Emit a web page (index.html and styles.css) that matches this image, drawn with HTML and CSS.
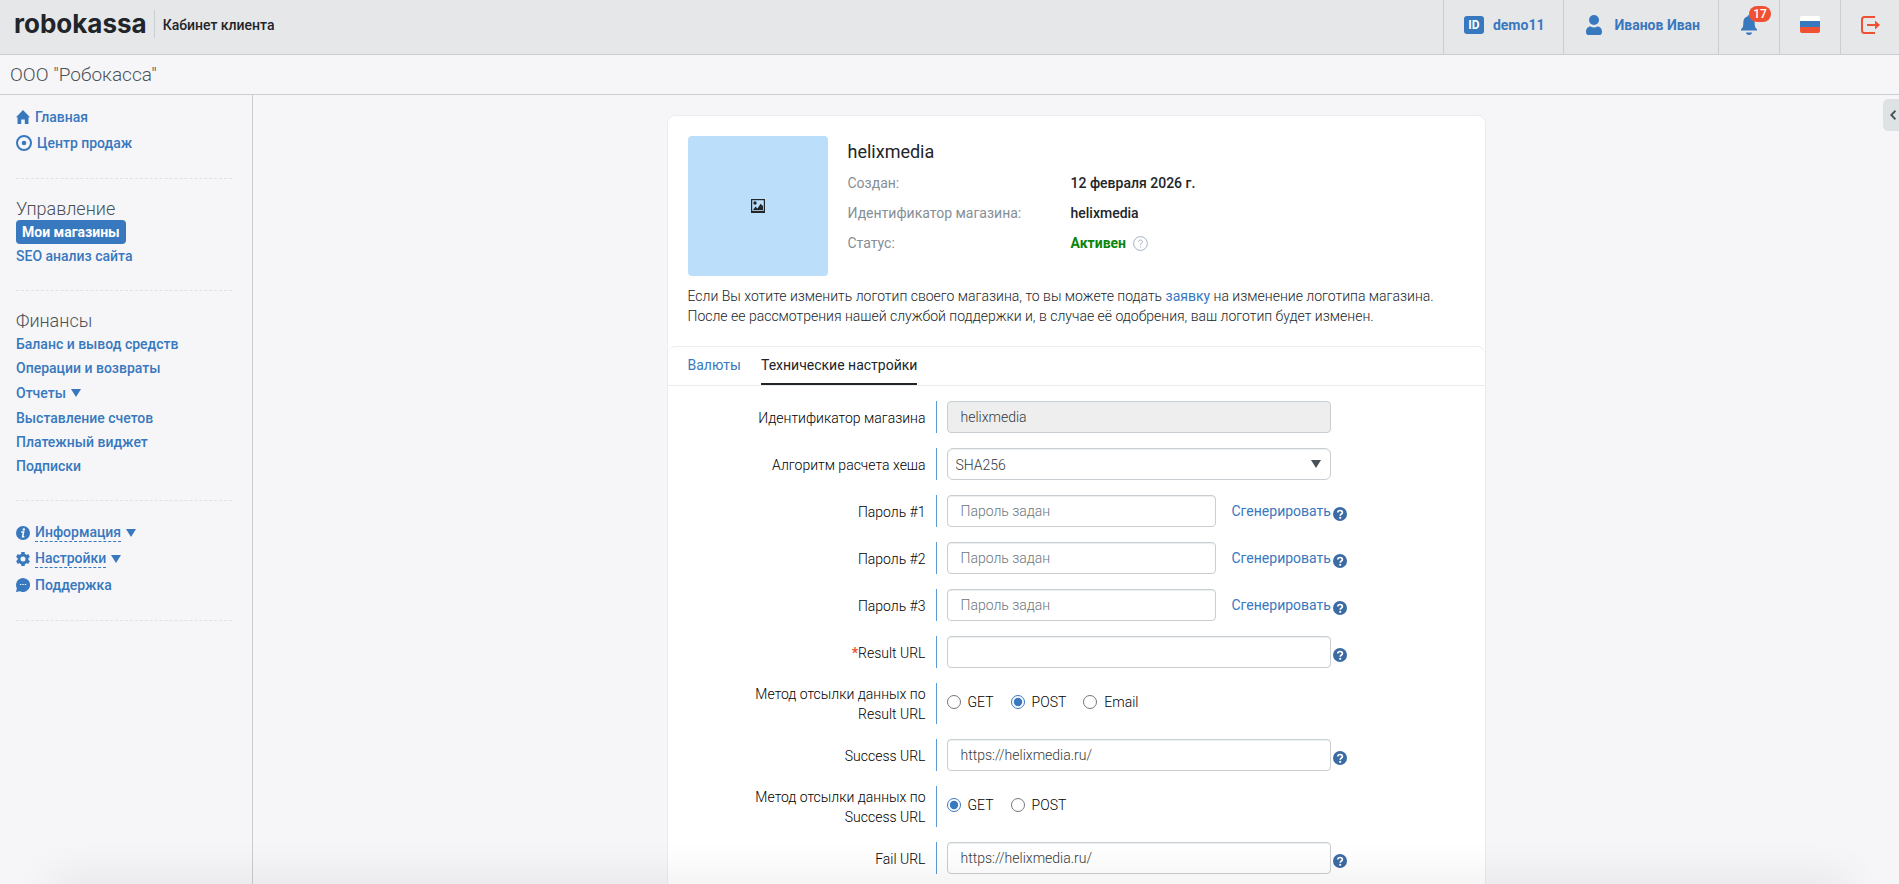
FILE: index.html
```html
<!DOCTYPE html>
<html lang="ru">

<head>
    <meta charset="UTF-8">
    <meta name="viewport" content="width=device-width, initial-scale=1.0">
    <title>Кабинет клиента</title>
    <link rel="stylesheet" href="styles.css">
</head>

<body>
    <!-- общие иконки -->
    <svg class="sprite" aria-hidden="true">
        <symbol id="help" viewBox="0 0 14 14">
            <circle cx="7" cy="7" r="7" fill="#3b6ba5" />
            <path d="M4.8 5.6C4.8 2.8 9.4 2.9 9.4 5.4C9.4 7 7.2 6.9 7.2 8.7" fill="none" stroke="#fff" stroke-width="1.7" />
            <circle cx="7.2" cy="10.8" r="1.1" fill="#fff" />
        </symbol>
        <symbol id="down" viewBox="0 0 10 8">
            <path d="M0 0H10L5 8Z" fill="currentColor" />
        </symbol>
    </svg>

    <header class="header">
        <a href="#" class="logo">robokassa</a>
        <span class="header-title">Кабинет клиента</span>
        <nav class="header-nav">
            <a href="#" class="header-item">
                <span class="id-icon">ID</span>
                <span>demo11</span>
            </a>
            <a href="#" class="header-item header-user">
                <svg width="16" height="20" viewBox="0 0 16 20" fill="currentColor">
                    <circle cx="8" cy="5" r="5" />
                    <path d="M0 17C0 13 2.5 11.5 4.5 11.5C6.5 12.7 9.5 12.7 11.5 11.5C13.5 11.5 16 13 16 17C16 19.5 14.5 20 13 20H3C1.5 20 0 19.5 0 17Z" />
                </svg>
                <span>Иванов Иван</span>
            </a>
            <a href="#" class="header-item header-square">
                <span class="bell">
                    <svg width="16" height="20" viewBox="0 0 16 20" fill="currentColor">
                        <path d="M8 0C9 0 9.5 .8 9.5 1.5C12.5 2.3 13.7 4.5 13.7 8C13.7 12 14.5 13.3 16 14V15.5H0V14C1.5 13.3 2.3 12 2.3 8C2.3 4.5 3.5 2.3 6.5 1.5C6.5 .8 7 0 8 0Z" />
                        <path d="M5 17.5H11C11 19 9.7 20 8 20S5 19 5 17.5Z" />
                    </svg>
                    <span class="badge">17</span>
                </span>
            </a>
            <a href="#" class="header-item header-square" aria-label="Язык">
                <span class="flag"></span>
            </a>
            <a href="#" class="header-item header-square logout" aria-label="Выход">
                <svg width="19" height="18" viewBox="0 0 19 18">
                    <path d="M14 1H3.5Q1 1 1 3.5V14.5Q1 17 3.5 17H14" fill="none" stroke="currentColor" stroke-width="2" />
                    <path d="M6 9H15" stroke="currentColor" stroke-width="2" />
                    <path d="M14 4.5L19 9L14 13.5Z" fill="currentColor" />
                </svg>
            </a>
        </nav>
    </header>

    <div class="company">ООО "Робокасса"</div>

    <div class="page">
        <aside class="sidebar">
            <ul class="menu menu-icons">
                <li><a href="#">
                    <svg width="14" height="14" viewBox="0 0 14 14" fill="currentColor">
                        <path d="M7 0L14 7.2H12.5V14H8.8V9.5H5.2V14H1.5V7.2H0Z" />
                    </svg>Главная</a></li>
                <li><a href="#">
                    <svg width="16" height="16" viewBox="0 0 16 16">
                        <circle cx="8" cy="8" r="7" fill="none" stroke="currentColor" stroke-width="2" />
                        <circle cx="8" cy="8" r="2.3" fill="currentColor" />
                    </svg>Центр продаж</a></li>
            </ul>
            <h2>Управление</h2>
            <ul class="menu">
                <li><a href="#" class="active">Мои магазины</a></li>
                <li><a href="#">SEO анализ сайта</a></li>
            </ul>
            <h2>Финансы</h2>
            <ul class="menu">
                <li><a href="#">Баланс и вывод средств</a></li>
                <li><a href="#">Операции и возвраты</a></li>
                <li class="submenu"><a href="#">Отчеты <svg class="arrow"><use href="#down" /></svg></a></li>
                <li><a href="#">Выставление счетов</a></li>
                <li><a href="#">Платежный виджет</a></li>
                <li><a href="#">Подписки</a></li>
            </ul>
            <ul class="menu menu-icons menu-info">
                <li><a href="#">
                    <svg width="14" height="14" viewBox="0 0 14 14">
                        <circle cx="7" cy="7" r="7" fill="currentColor" />
                        <circle cx="7.8" cy="3.5" r="1.2" fill="#fff" />
                        <path d="M5.2 6H7.6L6.6 10.8H8.3" fill="none" stroke="#fff" stroke-width="1.5" />
                    </svg><span class="dotted">Информация</span> <svg class="arrow"><use href="#down" /></svg></a></li>
                <li><a href="#">
                    <svg width="14" height="14" viewBox="0 0 14 14">
                        <circle cx="7" cy="7" r="4" fill="none" stroke="currentColor" stroke-width="3" />
                        <path d="M7 0V3M7 11V14M.9 3.5L3.5 5M10.5 9L13.1 10.5M.9 10.5L3.5 9M10.5 5L13.1 3.5" stroke="currentColor" stroke-width="3.5" />
                    </svg><span class="dotted">Настройки</span> <svg class="arrow"><use href="#down" /></svg></a></li>
                <li><a href="#">
                    <svg width="14" height="14" viewBox="0 0 14 14">
                        <path d="M7 0A7 7 0 1 1 4 13.3L0 14L.9 10.4A7 7 0 0 1 7 0Z" fill="currentColor" />
                        <path d="M4 6.5H5.3M6.4 6.5H7.7M8.8 6.5H10.1" stroke="#fff" stroke-width="1.2" />
                    </svg>Поддержка</a></li>
            </ul>
        </aside>

        <main class="content">
            <section class="card">
                <div class="shop">
                    <div class="shop-logo">
                        <svg width="14" height="14" viewBox="0 0 14 14">
                            <path d="M0 0H14V14H0Z" fill="#23282c" />
                            <path d="M1.2 1.2H12.8V11.8H1.2Z" fill="#bbdefb" />
                            <circle cx="4" cy="4" r="1.7" fill="#23282c" />
                            <path d="M2 11L4.5 7.5L6.5 9.5L9.5 4.8L12 7V11Z" fill="#23282c" />
                        </svg>
                    </div>
                    <div class="shop-info">
                        <h1>helixmedia</h1>
                        <dl>
                            <dt>Создан:</dt>
                            <dd>12 февраля 2026 г.</dd>
                            <dt>Идентификатор магазина:</dt>
                            <dd>helixmedia</dd>
                            <dt>Статус:</dt>
                            <dd class="status">Активен
                                <svg width="15" height="15" viewBox="0 0 15 15" fill="none" stroke="#a5b1c2">
                                    <circle cx="7.5" cy="7.5" r="6.9" />
                                    <path d="M5.5 5.9C5.5 3.5 9.5 3.5 9.5 5.8C9.5 7.3 7.5 7.3 7.5 9.2M7.5 10.4V11.5" />
                                </svg>
                            </dd>
                        </dl>
                    </div>
                </div>
                <div class="note">
                    <p>Если Вы хотите изменить логотип своего магазина, то вы можете подать <a href="#">заявку</a> на изменение логотипа магазина.</p>
                    <p>После ее рассмотрения нашей службой поддержки и, в случае её одобрения, ваш логотип будет изменен.</p>
                </div>

                <nav class="tabs">
                    <a href="#">Валюты</a>
                    <a href="#" class="current">Технические настройки</a>
                </nav>

                <form class="form">
                    <div class="row">
                        <label for="shop_id">Идентификатор магазина</label>
                        <div class="field"><input type="text" id="shop_id" value="helixmedia" disabled></div>
                    </div>
                    <div class="row">
                        <label for="hash">Алгоритм расчета хеша</label>
                        <div class="field">
                            <div class="select">
                                <select id="hash">
                                    <option>SHA256</option>
                                </select>
                                <svg class="arrow"><use href="#down" /></svg>
                            </div>
                        </div>
                    </div>
                    <div class="row">
                        <label for="pass1">Пароль #1</label>
                        <div class="field">
                            <input type="text" id="pass1" class="short" placeholder="Пароль задан">
                            <button type="button" class="generate">Сгенерировать</button>
                            <svg class="help"><use href="#help" /></svg>
                        </div>
                    </div>
                    <div class="row">
                        <label for="pass2">Пароль #2</label>
                        <div class="field">
                            <input type="text" id="pass2" class="short" placeholder="Пароль задан">
                            <button type="button" class="generate">Сгенерировать</button>
                            <svg class="help"><use href="#help" /></svg>
                        </div>
                    </div>
                    <div class="row">
                        <label for="pass3">Пароль #3</label>
                        <div class="field">
                            <input type="text" id="pass3" class="short" placeholder="Пароль задан">
                            <button type="button" class="generate">Сгенерировать</button>
                            <svg class="help"><use href="#help" /></svg>
                        </div>
                    </div>
                    <div class="row">
                        <label for="result_url"><span class="required">*</span>Result URL</label>
                        <div class="field">
                            <input type="text" id="result_url">
                            <svg class="help"><use href="#help" /></svg>
                        </div>
                    </div>
                    <div class="row" role="radiogroup" aria-labelledby="result_method">
                        <span class="label" id="result_method">Метод отсылки данных по Result URL</span>
                        <div class="field radios">
                            <label><input type="radio" name="result_method">GET</label>
                            <label><input type="radio" name="result_method" checked>POST</label>
                            <label><input type="radio" name="result_method">Email</label>
                        </div>
                    </div>
                    <div class="row">
                        <label for="success_url">Success URL</label>
                        <div class="field">
                            <input type="text" id="success_url" value="https://helixmedia.ru/">
                            <svg class="help"><use href="#help" /></svg>
                        </div>
                    </div>
                    <div class="row" role="radiogroup" aria-labelledby="success_method">
                        <span class="label" id="success_method">Метод отсылки данных по Success URL</span>
                        <div class="field radios">
                            <label><input type="radio" name="success_method" checked>GET</label>
                            <label><input type="radio" name="success_method">POST</label>
                        </div>
                    </div>
                    <div class="row">
                        <label for="fail_url">Fail URL</label>
                        <div class="field">
                            <input type="text" id="fail_url" value="https://helixmedia.ru/">
                            <svg class="help"><use href="#help" /></svg>
                        </div>
                    </div>
                </form>
            </section>
        </main>
    </div>

    <button type="button" class="panel-toggle" aria-label="Открыть панель">
        <svg width="6" height="10" viewBox="0 0 6 10" fill="none" stroke="#4a5157" stroke-width="2">
            <path d="M5.5 .7L1.3 5L5.5 9.3" />
        </svg>
    </button>
    <div class="bottom-shadow"></div>
</body>

</html>
```

FILE: styles.css
```css
* {
    margin: 0;
    padding: 0;
    box-sizing: border-box;
}

body {
    min-height: 100vh;
    display: flex;
    flex-direction: column;
    overflow: hidden;
    font-family: Roboto, "Liberation Sans", sans-serif;
    font-size: 14px;
    line-height: 20px;
    color: #212529;
    background: #f6f6f8;
}

a {
    color: #3878be;
    text-decoration: none;
}

ul {
    list-style: none;
}

.sprite {
    display: none;
}

.arrow {
    width: 10px;
    height: 8px;
}

/* шапка */
.header {
    display: flex;
    height: 55px;
    padding-left: 14px;
    background: #e6e7e9;
    border-bottom: 1px solid #c8ced2;
}

.logo {
    height: 28px;
    margin-top: 10px;
    padding-right: 7px;
    border-right: 1px solid #c8ced2;
    font-family: Inter, sans-serif;
    font-size: 26px;
    font-weight: 700;
    line-height: 28px;
    color: #212529;
}

.header-title {
    margin: 15px 0 0 8px;
    font-weight: 500;
}

.header-nav {
    display: flex;
    margin-left: auto;
}

.header-item {
    display: flex;
    align-items: center;
    padding: 0 19px 5px 20px;
    border-left: 1px solid #c8ced2;
    font-weight: 700;
}

.header-user {
    padding-left: 22px;
    padding-right: 18px;
}

.header-user svg {
    margin-right: 12px;
}

.header-square {
    justify-content: center;
    width: 61px;
    padding-left: 0;
    padding-right: 0;
}

.id-icon {
    width: 20px;
    height: 18px;
    margin-right: 9px;
    border-radius: 3px;
    background: #3878be;
    color: #fff;
    font-size: 12px;
    line-height: 18px;
    text-align: center;
}

.bell {
    position: relative;
    height: 20px;
}

.bell svg {
    display: block;
}

.badge {
    position: absolute;
    left: 8px;
    top: -9px;
    width: 22px;
    height: 16px;
    border-radius: 8px;
    background: #f05133;
    color: #fff;
    font-size: 12px;
    font-weight: 500;
    line-height: 16px;
    text-align: center;
}

.flag {
    width: 20px;
    height: 17px;
    border-radius: 2px;
    background: linear-gradient(#fff 5px, #3878be 5px, #3878be 11px, #f05133 11px);
}

.header-square.logout {
    width: 59px;
    color: #f05133;
}

.company {
    height: 40px;
    padding-left: 10px;
    border-bottom: 1px solid #c8ced2;
    font-size: 19px;
    font-weight: 300;
    line-height: 40px;
    color: #4a5157;
}

.page {
    display: flex;
    flex: 1;
}

/* боковое меню */
.sidebar {
    width: 253px;
    flex-shrink: 0;
    padding: 9px 20px 0 16px;
    border-right: 1px solid #c8ccd0;
}

.sidebar h2 {
    padding-top: 18px;
    font-size: 18px;
    font-weight: 300;
    line-height: 22px;
    color: #4a5157;
}

.menu {
    padding-bottom: 22px;
    margin-bottom: 1px;
    border-bottom: 1px dashed #dfe2e5;
    line-height: 24px;
}

.menu a {
    display: flex;
    align-items: center;
    width: fit-content;
    font-weight: 500;
}

.menu .arrow {
    margin-left: 5px;
}

.menu .submenu {
    line-height: 26px;
}

.menu-icons a {
    height: 26px;
}

.menu-icons a > svg:first-child {
    margin-right: 5px;
}

.menu-info {
    padding-top: 18px;
}

.menu .active {
    padding: 0 6px;
    border-radius: 4px;
    background: #3878be;
    color: #fff;
    font-weight: 700;
}

.dotted {
    line-height: 17px;
    border-bottom: 1px dashed #3878be;
}

/* карточка магазина */
.content {
    flex: 1;
    padding: 20px 16px 0;
}

.card {
    max-width: 819px;
    min-height: 100%;
    margin: 0 auto;
    background: #fff;
    border: 1px solid #ebecee;
    border-radius: 8px;
}

.shop {
    display: flex;
    gap: 20px;
    padding: 20px 20px 0;
}

.shop-logo {
    display: flex;
    align-items: center;
    justify-content: center;
    width: 140px;
    height: 140px;
    border-radius: 4px;
    background: #bbdefb;
}

.shop-info h1 {
    padding-top: 4px;
    font-size: 18px;
    font-weight: 400;
    line-height: 24px;
}

.shop-info dl {
    display: grid;
    grid-template-columns: 223px auto;
    padding-top: 4px;
    line-height: 30px;
}

.shop-info dt {
    color: #868e96;
}

.shop-info dd {
    font-weight: 500;
}

.shop-info .status {
    display: flex;
    align-items: center;
    gap: 7px;
    color: #0a850a;
    font-weight: 700;
}

.note {
    padding: 10px 20px 20px;
    font-weight: 300;
}

.note a {
    font-weight: 400;
}

.tabs {
    display: flex;
    gap: 20px;
    padding: 0 20px;
    border-top: 1px solid #ebecee;
    border-bottom: 1px solid #ebecee;
    border-radius: 8px 8px 0 0;
}

.tabs a {
    padding-top: 1px;
    line-height: 35px;
    border-bottom: 2px solid transparent;
}

.tabs .current {
    color: #212529;
    border-color: #212529;
}

/* форма */
.form {
    display: flex;
    flex-direction: column;
    gap: 15px;
    padding: 15px 20px;
    font-weight: 300;
    color: #000;
}

.row {
    display: flex;
}

.row > label,
.row > .label {
    display: flex;
    align-items: center;
    justify-content: flex-end;
    width: 249px;
    padding: 1px 10px 0 60px;
    border-right: 1px solid #5b9bd5;
    text-align: right;
}

.required {
    color: #f05133;
    font-weight: 700;
}

.field {
    display: flex;
    align-items: center;
    padding-left: 10px;
}

.field input[type="text"],
.field select {
    width: 384px;
    height: 32px;
    padding: 0 13px;
    border: 1px solid #c8ced2;
    border-radius: 4px;
    background: #fff;
    box-shadow: inset 0 1px 1px #eceeef;
    font: inherit;
    color: #343a40;
}

.field input[type="text"]:disabled {
    background: #eee;
}

.field input[type="text"].short {
    width: 269px;
}

.field input::placeholder {
    color: #6c757d;
}

.select {
    position: relative;
}

.field select {
    display: block;
    padding: 1px 8px 0;
    border-radius: 6px;
    appearance: none;
}

.select .arrow {
    position: absolute;
    right: 10px;
    top: 12px;
    color: #4a5157;
    pointer-events: none;
}

.generate {
    margin-left: 16px;
    padding-bottom: 1px;
    border: 0;
    background: none;
    color: #3878be;
    font: inherit;
    font-weight: 400;
}

.help {
    width: 14px;
    height: 14px;
    margin: 5px 0 0 2px;
}

.radios {
    gap: 17px;
    padding-bottom: 3px;
}

.radios label {
    display: flex;
    align-items: center;
}

.radios input {
    width: 14px;
    height: 14px;
    margin-right: 7px;
    accent-color: #3878be;
}

.panel-toggle {
    position: fixed;
    right: 0;
    top: 99px;
    width: 16px;
    height: 32px;
    padding-left: 4px;
    border: 0;
    border-radius: 5px 0 0 5px;
    background: #dfe2e5;
}

.bottom-shadow {
    position: fixed;
    left: 50px;
    right: 50px;
    bottom: -10px;
    height: 10px;
    box-shadow: 0 0 40px rgba(0, 0, 0, 0.2);
}
```
